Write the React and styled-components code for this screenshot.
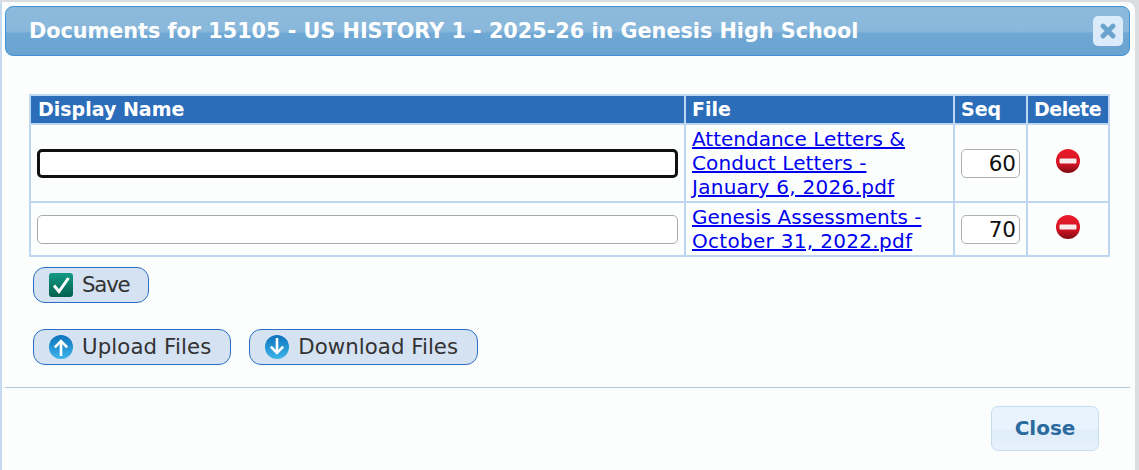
import styled, { createGlobalStyle } from 'styled-components';

const GlobalStyle = createGlobalStyle`
    html, body {
        margin: 0;
        padding: 0;
        background: #dcdde0;
    }
    * {
        box-sizing: border-box;
    }
`;

const documents = [
    {
        id: 1,
        lines: [
            { text: 'Attendance Letters &', spacing: 0 },
            { text: 'Conduct Letters -', spacing: 0.1 },
            { text: 'January 6, 2026.pdf', spacing: 0.27 },
        ],
        seq: 60,
        focused: true,
    },
    {
        id: 2,
        lines: [
            { text: 'Genesis Assessments -', spacing: 0 },
            { text: 'October 31, 2022.pdf', spacing: 0.3 },
        ],
        seq: 70,
    },
];

function MinusIcon() {
    return (
        <svg width="24" height="24" viewBox="0 0 24 24">
            <defs>
                <linearGradient id="minusFill" x1="0" y1="0" x2="0" y2="1">
                    <stop offset="0" stopColor="#ea1c2a" />
                    <stop offset="0.6" stopColor="#d51423" />
                    <stop offset="1" stopColor="#7c0c14" />
                </linearGradient>
            </defs>
            <circle cx="12" cy="12" r="12" fill="url(#minusFill)" />
            <rect x="3.5" y="9.5" width="17" height="5" rx="1" fill="#f6ecec" />
        </svg>
    );
}

function CheckIcon() {
    return (
        <svg width="24" height="24" viewBox="0 0 24 24">
            <defs>
                <linearGradient id="checkFill" x1="0" y1="0" x2="0" y2="1">
                    <stop offset="0" stopColor="#119b84" />
                    <stop offset="1" stopColor="#04604f" />
                </linearGradient>
            </defs>
            <rect width="24" height="24" rx="3" fill="url(#checkFill)" />
            <path d="M5 12.5l5 6L19.5 5" fill="none" stroke="#fff" strokeWidth="3" />
        </svg>
    );
}

function ArrowIcon({ down }) {
    const id = down ? 'arrowDown' : 'arrowUp';
    return (
        <svg width="24" height="24" viewBox="0 0 24 24">
            <defs>
                <linearGradient id={id} x1="0" y1="0" x2="0" y2="1">
                    <stop offset="0" stopColor="#0d72bd" />
                    <stop offset="1" stopColor="#3db5ea" />
                </linearGradient>
            </defs>
            <circle cx="12" cy="12" r="12" fill={`url(#${id})`} />
            <g transform={down ? 'rotate(180 12 12)' : undefined} fill="none" stroke="#fff" strokeWidth="2.6">
                <path d="M12 21V6" />
                <path d="M5.8 12.4L12 6l6.2 6.4" />
            </g>
        </svg>
    );
}

function CloseIcon() {
    return (
        <svg width="16" height="16" viewBox="0 0 16 16">
            <path d="M3 3l10 10M13 3L3 13" stroke="#6ba3cf" strokeWidth="4.8" strokeLinecap="round" />
        </svg>
    );
}

export default function App() {
    return (
        <>
            <GlobalStyle />
            <Modal>
                <TitleBar>
                    <Title>Documents for 15105 - US HISTORY 1 - 2025-26 in Genesis High School</Title>
                    <CloseBox>
                        <CloseIcon />
                    </CloseBox>
                </TitleBar>

                <Content>
                    <Table>
                        <colgroup>
                            <col style={{ width: 655 }} />
                            <col style={{ width: 269 }} />
                            <col style={{ width: 73 }} />
                            <col style={{ width: 82 }} />
                        </colgroup>
                        <thead>
                            <tr>
                                <Th>Display Name</Th>
                                <Th>File</Th>
                                <Th>Seq</Th>
                                <Th $spacing={-0.5}>Delete</Th>
                            </tr>
                        </thead>
                        <tbody>
                            {documents.map(doc => (
                                <tr key={doc.id}>
                                    <Td>
                                        <NameInput $focused={doc.focused} defaultValue="" />
                                    </Td>
                                    <Td>
                                        <FileLink href="#">
                                            {doc.lines.map(line => (
                                                <FileLine key={line.text} $spacing={line.spacing}>
                                                    {line.text}
                                                </FileLine>
                                            ))}
                                        </FileLink>
                                    </Td>
                                    <Td>
                                        <SeqInput defaultValue={doc.seq} />
                                    </Td>
                                    <DeleteCell>
                                        <MinusIcon />
                                    </DeleteCell>
                                </tr>
                            ))}
                        </tbody>
                    </Table>

                    <ButtonRow>
                        <ActionButton>
                            <CheckIcon />
                            <ButtonLabel $spacing={-1.2}>Save</ButtonLabel>
                        </ActionButton>
                    </ButtonRow>

                    <ButtonRow $second>
                        <ActionButton>
                            <ArrowIcon />
                            <ButtonLabel $spacing={0.1}>Upload Files</ButtonLabel>
                        </ActionButton>
                        <ActionButton>
                            <ArrowIcon down />
                            <ButtonLabel $spacing={0.03}>Download Files</ButtonLabel>
                        </ActionButton>
                    </ButtonRow>
                </Content>

                <Footer>
                    <CloseButton>Close</CloseButton>
                </Footer>
            </Modal>
        </>
    );
}

const Modal = styled.div`
    width: 1135px;
    height: 470px;
    margin-top: 2px;
    padding: 4px 5px 0 3px;
    background: #fcfefe;
    border-left: 2px solid #c5daf0;
    border-top-right-radius: 8px;
    font-family: "DejaVu Sans", sans-serif;
    overflow: hidden;
`;

const TitleBar = styled.div`
    height: 50px;
    width: 1125px;
    display: flex;
    align-items: center;
    justify-content: space-between;
    padding: 0 6px 0 23px;
    border: 1px solid #3f93d6;
    border-radius: 8px;
    background: linear-gradient(to bottom, #8cb9dc 0%, #8ab8db 50%, #6fa8d4 55%, #6ba3d1 100%);
`;

const Title = styled.div`
    color: #fff;
    font-size: 20.75px;
    font-weight: 700;
`;

const CloseBox = styled.div`
    width: 30px;
    height: 30px;
    border-radius: 5px;
    background: #dcebf9;
    display: flex;
    align-items: center;
    justify-content: center;
`;

const Content = styled.div`
    padding: 38px 0 0 24px;
`;

const Table = styled.table`
    width: 1079px;
    table-layout: fixed;
    border-collapse: collapse;
    border: 2px solid #bdd7f0;
`;

const Th = styled.th`
    height: 29px;
    padding: 0 6px 2px 6px;
    background: #2b6db9;
    color: #fff;
    font-size: 19px;
    font-weight: 700;
    letter-spacing: ${props => props.$spacing || 0}px;
    text-align: left;
    border: 2px solid #bdd7f0;
    &:first-child {
        padding-left: 7px;
    }
`;

const Td = styled.td`
    padding: 2px 6px;
    border: 2px solid #bdd7f0;
    vertical-align: middle;
`;

const DeleteCell = styled(Td)`
    text-align: center;
    line-height: 0;
    padding-bottom: 6px;
`;

const NameInput = styled.input`
    display: block;
    width: 100%;
    height: 29px;
    border-radius: 5px;
    background: #fff;
    outline: none;
    border: ${props => (props.$focused ? '3px solid #101010' : '1px solid #a9a9a9')};
`;

const FileLink = styled.a`
    display: block;
    color: #0000ee;
    font-size: 20px;
    line-height: 24px;
    text-decoration: underline;
`;

const FileLine = styled.span`
    display: block;
    letter-spacing: ${props => props.$spacing}px;
`;

const SeqInput = styled.input`
    display: block;
    width: 59px;
    height: 29px;
    padding: 0 3px;
    border: 1px solid #b0b0b0;
    border-radius: 5px;
    background: #fff;
    color: #111;
    font-family: inherit;
    font-size: 21.5px;
    text-align: right;
`;

const ButtonRow = styled.div`
    display: flex;
    gap: 18px;
    margin: ${props => (props.$second ? '26px' : '10px')} 0 0 4px;
`;

const ActionButton = styled.button`
    height: 36px;
    display: flex;
    align-items: center;
    gap: 9px;
    padding: 0 19px 0 15px;
    border: 1px solid #2d6fc4;
    border-radius: 12px;
    background: #d5e2f2;
    color: #333;
    font-family: inherit;
    font-size: 21.3px;
`;

const ButtonLabel = styled.span`
    padding-bottom: 2px;
    letter-spacing: ${props => props.$spacing}px;
`;

const Footer = styled.div`
    width: 1125px;
    margin-top: 22px;
    padding: 18px 31px 0 0;
    border-top: 1px solid #adc9e2;
    display: flex;
    justify-content: flex-end;
`;

const CloseButton = styled.button`
    width: 108px;
    height: 45px;
    padding: 0 0 2px;
    border: 1px solid #c5dcf1;
    border-radius: 7px;
    background: linear-gradient(to bottom, #e9f3fd 0%, #e9f3fd 50%, #dfedfa 55%, #e6f1fc 100%);
    color: #2a6a9e;
    font-family: inherit;
    font-size: 20px;
    font-weight: 700;
`;
